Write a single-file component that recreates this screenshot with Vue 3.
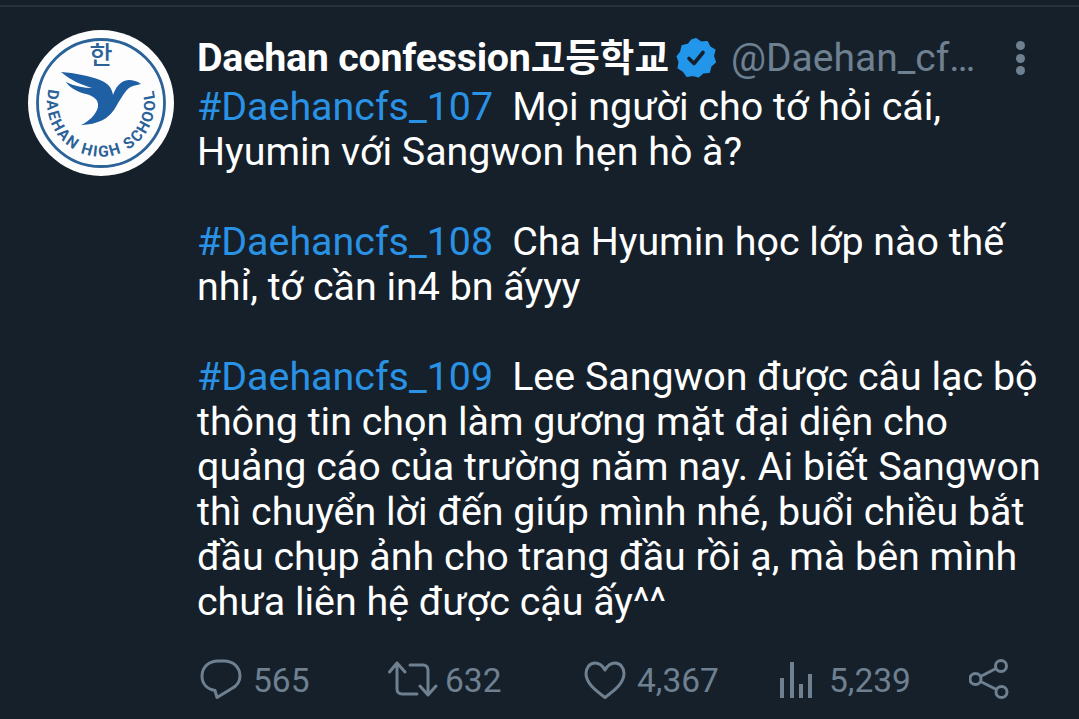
<script setup>
const paragraphs = [
  { tag: '#Daehancfs_107', lines: ['Mọi người cho tớ hỏi cái,', 'Hyumin với Sangwon hẹn hò à?'] },
  { tag: '#Daehancfs_108', lines: ['Cha Hyumin học lớp nào thế', 'nhỉ, tớ cần in4 bn ấyyy'] },
  { tag: '#Daehancfs_109', lines: ['Lee Sangwon được câu lạc bộ', 'thông tin chọn làm gương mặt đại diện cho', 'quảng cáo của trường năm nay. Ai biết Sangwon', 'thì chuyển lời đến giúp mình nhé, buổi chiều bắt', 'đầu chụp ảnh cho trang đầu rồi ạ, mà bên mình', 'chưa liên hệ được cậu ấy^^'] }
]
</script>

<template>
  <div class="page">
    <article class="tweet">
      <svg class="avatar" viewBox="0 0 146 146" width="146" height="146">
        <defs>
          <path id="arc" d="M 20.800 59 A 54 54 0 1 0 125.200 59" fill="none" />
        </defs>
        <circle cx="73" cy="73" r="73" fill="#fdfdfe" />
        <circle cx="73" cy="73" r="63.500" fill="none" stroke="#2b6297" stroke-width="2.800" />
        <text x="73" y="34" class="han">한</text>
        <path fill="#1f5fa3" d="M33 42 C47 43 62 46 72 50 C80 53 84 58 85 65 C87 59 92 50 101 50 C105 50 109 51 113 54 L105 56 C98 58 95 66 90 73 C84 85 76 94 53 95 C60 92 68 85 70 77 C71 70 66 66 58 64 C50 62 42 58 38 52 C46 56 56 58 64 58 C54 55 42 50 33 42 Z" />
        <text class="school"><textPath href="#arc" startOffset="50%" text-anchor="middle">DAEHAN HIGH SCHOOL</textPath></text>
      </svg>

      <div class="body">
        <header class="head">
          <span class="name"><span class="latin">Daehan confession</span><span class="ko">고등학교</span></span>
          <svg class="badge" viewBox="0 0 40 40" width="40" height="40">
            <path fill="#2196ea" d="M20 1 L25 4.500 L31 4 L33.500 9 L38.500 12 L37 18 L39 24 L34.500 28 L33 34 L27 34.500 L22.500 38.500 L17 37 L11 38 L7.500 33 L2.500 30 L3.500 24 L1.500 18.500 L5 14 L6.500 8 L12.500 6.500 L15.500 2.500 Z" stroke="#2196ea" stroke-width="2" stroke-linejoin="round" />
            <path fill="none" stroke="#15202b" stroke-width="3.600" stroke-linecap="round" stroke-linejoin="round" d="M13 20.500 L18 25.500 L27 14.500" />
          </svg>
          <span class="handle">@Daehan_cf…</span>
          <span class="more"><i></i><i></i><i></i></span>
        </header>

        <div class="text">
          <p v-for="p in paragraphs" :key="p.tag">
            <span v-for="(line, i) in p.lines" :key="i" class="line">
              <template v-if="i === 0"><a class="tag">{{ p.tag }}</a><span class="tagspace"></span></template>{{ line }}
            </span>
          </p>
        </div>

        <footer class="stats">
          <div class="stat">
            <svg class="ico" viewBox="0 0 42 42" width="42" height="42"><path fill="none" stroke="#6f8091" stroke-width="3" stroke-linejoin="round" d="M15 31.500 C7 30 2 24.500 2 17 C2 8 9 2 18 2 H24 C33 2 40 8 40 17 C40 23 36 27.500 31 30 L17 38.500 Z" /></svg>
            <span class="count">565</span>
          </div>
          <div class="stat">
            <svg class="ico rt" viewBox="0 0 50 42" width="50" height="42"><g fill="none" stroke="#6f8091" stroke-width="3" stroke-linecap="round" stroke-linejoin="round"><path d="M1.500 13 L9 4 L17 13 M9 4 V30 C9 33 11 35 14 35 H29" /><path d="M48 27 L40 36 L32 27 M40 36 V11 C40 8 38 6 35 6 H22" /></g></svg>
            <span class="count">632</span>
          </div>
          <div class="stat">
            <svg class="ico" viewBox="0 0 42 38" width="42" height="38"><path fill="none" stroke="#6f8091" stroke-width="3" stroke-linejoin="round" d="M21 9 C18 3.500 14 2 11 2 C5.500 2 2 7 2 12.500 C2 22 11 29 21 36.500 C31 29 40 22 40 12.500 C40 7 36.500 2 31 2 C28 2 24 3.500 21 9 Z" /></svg>
            <span class="count">4,367</span>
          </div>
          <div class="stat">
            <svg class="ico bars" viewBox="0 0 32 36" width="32" height="36"><g fill="#6f8091"><rect x="0" y="16" width="4" height="20" /><rect x="10" y="0" width="4" height="36" /><rect x="19" y="22" width="4" height="14" /><rect x="28" y="12" width="4" height="24" /></g></svg>
            <span class="count">5,239</span>
          </div>
          <div class="stat">
            <svg class="ico" viewBox="0 0 42 42" width="42" height="42"><g fill="none" stroke="#6f8091" stroke-width="3"><circle cx="32" cy="7" r="5.500" /><circle cx="6.500" cy="20" r="5.500" /><circle cx="32.500" cy="33" r="5.500" /><path d="M27 9.500 L11.500 17.500 M11.500 22.500 L27.500 30.500" /></g></svg>
          </div>
        </footer>
      </div>
    </article>
  </div>
</template>

<style>
html, body { margin: 0; background: #15202b; }
</style>

<style scoped>
.page {
  width: 1079px;
  height: 719px;
  box-sizing: border-box;
  overflow: hidden;
  padding-top: 5px;
  background: #15202b;
  font-family: Roboto, "Noto Sans CJK KR", sans-serif;
  color: #fff;
}
.tweet {
  display: flex;
  gap: 24px;
  padding: 23px 0 0 28px;
  border-top: 2px solid #27323d;
}
.avatar { flex: none; width: 146px; height: 146px; }
.han { font: 500 25px "Noto Sans CJK KR", sans-serif; fill: #2b6297; text-anchor: middle; }
.school { font: 700 15.500px Roboto, sans-serif; fill: #2b6297; letter-spacing: 1.700px; }
.body { flex: 1; min-width: 0; margin: 2px 0 0 -1px; }
.head {
  display: flex;
  align-items: center;
  height: 52px;
}
.name { font-size: 39.400px; line-height: 50px; font-weight: 700; white-space: nowrap; }
.latin { letter-spacing: -0.250px; }
.ko { font-size: 37.600px; line-height: 40px; }
.badge { flex: none; margin-left: 7px; }
.handle { margin-left: 15px; font-size: 39px; color: #6f8091; white-space: nowrap; }
.more {
  display: flex;
  flex-direction: column;
  gap: 3.500px;
  margin-left: 41px;
}
.more i { width: 9px; height: 9px; border-radius: 50%; background: #6f8091; display: block; }
.text { font-size: 39.400px; line-height: 45px; }
.text p { margin: 0 0 45px; }
.text p:last-child { margin-bottom: 0; }
.line { display: block; white-space: nowrap; }
.tag { color: #2a92e4; }
.tagspace { display: inline-block; width: 19px; }
.stats {
  display: grid;
  grid-template-columns: 188px 196px 195px 190px 60px;
  margin: 34px 0 0 3px;
}
.stat { display: flex; align-items: center; height: 44px; }
.ico { flex: none; }
.rt { margin-right: 7px; }
.bars { margin: 0 17px 0 1px; }
.count { margin-left: 11px; font-size: 33.500px; color: #6f8091; }
.rt + .count, .bars + .count { margin-left: 0; }
</style>
